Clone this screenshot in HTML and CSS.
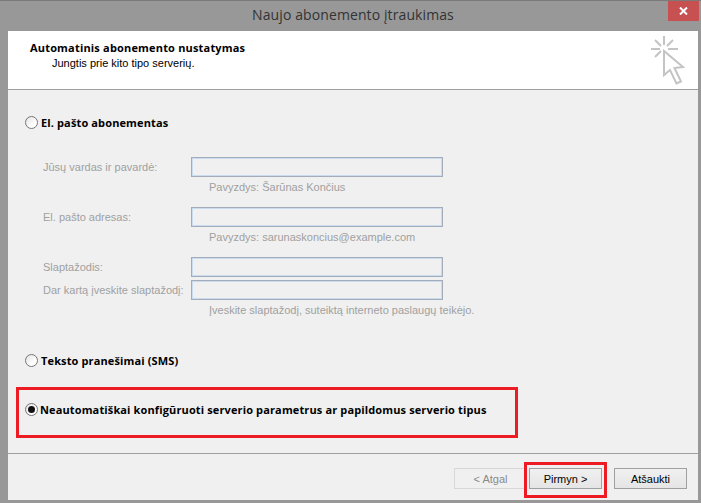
FILE: index.html
```html
<!DOCTYPE html>
<html lang="lt">
<head>
<meta charset="utf-8">
<title>Naujo abonemento įtraukimas</title>
<link rel="stylesheet" href="styles.css">
</head>
<body>
<div class="window">
  <div class="titlebar">
    <div class="title">Naujo abonemento įtraukimas</div>
    <div class="close"><svg width="9" height="8" viewBox="0 0 9 8"><path d="M1 0.5 L8 7.5 M8 0.5 L1 7.5" stroke="#fff" stroke-width="2" fill="none"/></svg></div>
  </div>
  <div class="client">
    <header class="head">
      <div class="head-text">
        <div class="head-title">Automatinis abonemento nustatymas</div>
        <div class="head-sub">Jungtis prie kito tipo serverių.</div>
      </div>
      <svg class="wizard" width="36" height="50" viewBox="0 0 36 50">
        <g stroke="#c4c4c4" stroke-width="2" fill="none">
          <path d="M14 0 V9 M1 13 H10 M18 13 H28 M5 4 L11 10 M23 4 L17 10 M5 21 L11 15"/>
          <path d="M14 15 V39 L20 34 L26.500 47.500 L31 45.500 L24.500 32 L33 31 Z" stroke-linejoin="miter"/>
        </g>
      </svg>
    </header>
    <main class="body">
      <label class="radio-row first"><span class="radio"></span><span class="radio-label">El. pašto abonementas</span></label>
      <div class="fields">
        <div class="field"><span class="field-label">Jūsų vardas ir pavardė:</span><span class="input"></span></div>
        <div class="hint">Pavyzdys: Šarūnas Končius</div>
        <div class="field gap"><span class="field-label">El. pašto adresas:</span><span class="input"></span></div>
        <div class="hint">Pavyzdys: sarunaskoncius@example.com</div>
        <div class="field gap"><span class="field-label">Slaptažodis:</span><span class="input"></span></div>
        <div class="field tight"><span class="field-label">Dar kartą įveskite slaptažodį:</span><span class="input"></span></div>
        <div class="hint">Įveskite slaptažodį, suteiktą interneto paslaugų teikėjo.</div>
      </div>
      <label class="radio-row sms"><span class="radio"></span><span class="radio-label">Teksto pranešimai (SMS)</span></label>
      <div class="highlight">
        <label class="radio-row"><span class="radio checked"></span><span class="radio-label">Neautomatiškai konfigūruoti serverio parametrus ar papildomus serverio tipus</span></label>
      </div>
    </main>
    <footer class="foot">
      <button class="btn disabled">&lt; Atgal</button>
      <button class="btn next">Pirmyn &gt;<span class="next-mark"></span></button>
      <button class="btn cancel">Atšaukti</button>
    </footer>
  </div>
</div>
</body>
</html>
```
FILE: styles.css
```css
* { box-sizing: border-box; }
html, body { margin: 0; padding: 0; }
body { width: 701px; height: 503px; overflow: hidden; font-family: "Liberation Sans", Arial, sans-serif; font-size: 11px; }
.window { width: 701px; height: 503px; background: #989898; border-top: 1px solid #7a7a7a; padding: 0 3px 3px 8px; display: flex; flex-direction: column; }
.titlebar { height: 30px; flex: none; display: flex; justify-content: center; position: relative; }
.title { font-family: "Open Sans", sans-serif; font-size: 14px; letter-spacing: 0.1px; line-height: 30px; color: #333; margin-top: -1px; }
.close { position: absolute; right: -1px; top: 0; width: 31px; height: 20px; background: #c75050; display: flex; align-items: center; justify-content: center; }
.client { flex: 1; background: #f0f0f0; display: flex; flex-direction: column; min-height: 0; }
.head { height: 59px; flex: none; background: #fff; border-bottom: 1px solid #a0a0a0; display: flex; justify-content: space-between; padding: 5px 12px 0 22px; }
.head-title { font-family: "Open Sans", sans-serif; font-weight: 700; font-size: 11px; letter-spacing: 0.18px; line-height: 15px; color: #000; margin-top: 4px; }
.head-sub { font-size: 11px; line-height: 15px; color: #000; padding-left: 22px; margin-top: 1px; }
.wizard { flex: none; }
.body { flex: 1; display: flex; flex-direction: column; padding: 0 0 0 8px; min-height: 0; }
.radio-row { display: flex; align-items: center; height: 16px; }
.radio-row.first { margin: 24px 0 0 9px; }
.radio-row.sms { margin: 34px 0 0 9px; }
.radio { width: 13px; height: 13px; border-radius: 50%; border: 1px solid #747474; background: linear-gradient(135deg, #e4e4e4, #fff 70%); flex: none; margin-right: 3px; position: relative; }
.radio.checked { margin-right: 2px; }
.radio.checked::after { content: ""; position: absolute; left: 2px; top: 2px; width: 7px; height: 7px; border-radius: 50%; background: #111; }
.radio-label { font-family: "Open Sans", sans-serif; font-weight: 700; font-size: 11px; letter-spacing: 0.13px; color: #000; white-space: nowrap; }
.fields { margin: 27px 0 0 27px; color: #a0a0a0; }
.field { display: flex; align-items: center; height: 20px; }
.field.gap { margin-top: 12px; }
.field.tight { margin-top: 3px; }
.field-label { width: 148px; flex: none; color: #a0a0a0; white-space: nowrap; }
.input { width: 252px; height: 20px; flex: none; border: 1px solid #a3acb8; box-shadow: inset 0 0 0 1px #c9dcf0; }
.hint { height: 18px; line-height: 21px; padding-left: 166px; color: #a0a0a0; white-space: nowrap; }
.highlight { width: 502px; height: 51px; margin-top: 19px; border: 3px solid #ed1c24; padding: 11px 0 0 6px; }
.foot { height: 47px; flex: none; border-top: 1px solid #a0a0a0; display: flex; align-items: flex-start; padding: 14px 0 0 446px; margin-top: auto; }
.btn { width: 73px; height: 21px; padding: 0; background: linear-gradient(#f0f0f0, #e5e5e5); border: 1px solid #a0a0a0; font-family: inherit; font-size: 11px; color: #000; position: relative; }
.btn.disabled { background: #f0f0f0; border-color: #d8d8d8; color: #8a8a8a; }
.btn.next { margin-left: 2px; }
.btn.cancel { margin-left: 12px; }
.next-mark { position: absolute; left: -6px; right: -6px; top: -7px; bottom: -10px; border: 3px solid #ed1c24; }
```
